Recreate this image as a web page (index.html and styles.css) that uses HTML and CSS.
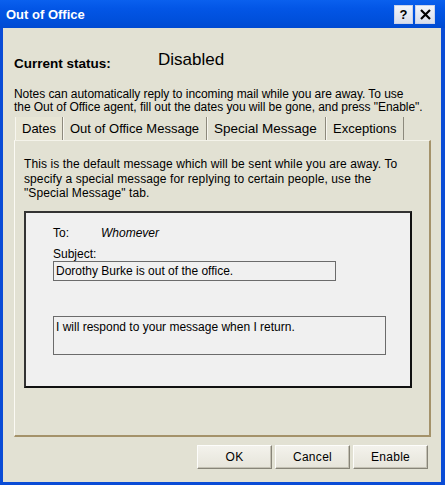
FILE: index.html
```html
<!DOCTYPE html>
<html>
<head>
<meta charset="utf-8">
<link rel="stylesheet" href="styles.css">
</head>
<body>
<div class="window">
  <div class="titlebar">
    <span class="title">Out of Office</span>
    <div class="tbtns">
      <span class="tb help">?</span>
      <span class="tb close"><svg width="11" height="11" viewBox="0 0 11 11"><path d="M1 1 L10 10 M10 1 L1 10" stroke="#000" stroke-width="2.2"/></svg></span>
    </div>
  </div>
  <div class="body">
    <div class="status">
      <span class="status-label">Current status:</span>
      <span class="status-value">Disabled</span>
    </div>
    <p class="notes">Notes can automatically reply to incoming mail while you are away. To use<br>the Out of Office agent, fill out the dates you will be gone, and press "Enable".</p>
    <div class="tabs">
      <span class="tab tab-dates">Dates</span>
      <span class="tab tab-active">Out of Office Message</span>
      <span class="tab">Special Message</span>
      <span class="tab">Exceptions</span>
    </div>
    <div class="panel">
      <p class="desc">This is the default message which will be sent while you are away. To<br>specify a special message for replying to certain people, use the<br>"Special Message" tab.</p>
      <div class="memo">
        <div class="to-row"><span class="to-label">To:</span><span class="to-value">Whomever</span></div>
        <div class="subj-label">Subject:</div>
        <div class="field subject">Dorothy Burke is out of the office.</div>
        <div class="field bodytext">I will respond to your message when I return.</div>
      </div>
    </div>
    <div class="buttons">
      <span class="btn">OK</span>
      <span class="btn">Cancel</span>
      <span class="btn">Enable</span>
    </div>
  </div>
</div>
</body>
</html>
```
FILE: styles.css
```css
* { box-sizing: border-box; margin: 0; padding: 0; }
body { margin: 0; width: 445px; height: 485px; overflow: hidden; font-family: "Liberation Sans", Arial, sans-serif; color: #000; }
.window { width: 445px; height: 485px; background: #0a4cd6; display: flex; flex-direction: column; }
.titlebar { height: 28px; display: flex; align-items: center; justify-content: space-between; padding: 0 10px 0 6px; background: linear-gradient(#0a60ee, #0356e6 30%, #0050dc 70%, #004ad2); }
.title { color: #fff; font-weight: bold; font-size: 13px; padding-top: 1px; }
.tbtns { display: flex; gap: 2px; margin-top: 1px; }
.tb { width: 19px; height: 19px; display: flex; align-items: center; justify-content: center; background: linear-gradient(#f2f4fa, #d9deec); border: 1px solid #c9d2ea; font-weight: bold; font-size: 13px; color: #000; }
.close { width: 20px; }
.body { flex: 1; margin: 0 4px 3px 3px; background: #e2e1d3; padding: 0 10px 0 11px; display: flex; flex-direction: column; }
.status { margin-top: 22px; height: 22px; display: flex; align-items: center; }
.status-label { width: 144px; font-weight: bold; font-size: 13.5px; padding-top: 4px; }
.status-value { font-size: 17px; padding-bottom: 2px; }
.notes { margin-top: 16px; font-size: 12px; line-height: 13px; height: 26px; white-space: nowrap; letter-spacing: -0.05px; }
.tabs { margin-top: 3px; height: 23px; display: flex; padding-left: 1px; }
.tab { height: 23px; display: flex; align-items: center; padding: 0 6px; font-size: 13px; border-right: 1px solid #8c897c; border-left: 1px solid #f7f6ef; white-space: nowrap; }
.tab-dates { width: 48px; background: #e7e5d5; }
.tab-active { width: 144px; }
.tab:nth-child(3) { width: 119px; font-size: 13.5px; }
.tab:nth-child(4) { width: 78px; }
.panel { height: 297px; width: 417px; border-top: 1px solid #f4f3ea; border-left: 1px solid #fbfaf4; border-right: 2px solid #a4926a; border-bottom: 2px solid #a4926a; padding: 16px 0 0 9px; }
.desc { font-size: 12px; line-height: 14.5px; white-space: nowrap; letter-spacing: 0.1px; }
.memo { margin-top: 10px; width: 388px; height: 177px; background: #f0f0f0; border: 2px solid #111; border-top-color: #333; border-left-color: #333; padding-left: 27px; display: flex; flex-direction: column; }
.to-row { margin-top: 12px; height: 16px; display: flex; align-items: center; font-size: 12px; }
.to-label { width: 48px; }
.to-value { font-style: italic; }
.subj-label { margin-top: 7px; height: 13px; line-height: 13px; font-size: 12px; }
.field { border: 1px solid #6b6b6b; font-size: 12px; padding-left: 2px; background: #f0f0f0; }
.subject { width: 283px; height: 20px; line-height: 18px; }
.bodytext { margin-top: 35px; width: 333px; height: 39px; padding-top: 3px; line-height: 14px; }
.buttons { margin-top: 8px; margin-right: 3px; display: flex; justify-content: flex-end; gap: 3px; }
.btn { width: 75px; height: 24px; display: flex; align-items: center; justify-content: center; font-size: 12px; background: linear-gradient(#f3f2ec, #e6e4da); border: 1px solid; border-color: #fdfdfb #878478 #878478 #fdfdfb; box-shadow: inset -1px -1px 0 #c4c1b4; letter-spacing: 0.3px; }
```
